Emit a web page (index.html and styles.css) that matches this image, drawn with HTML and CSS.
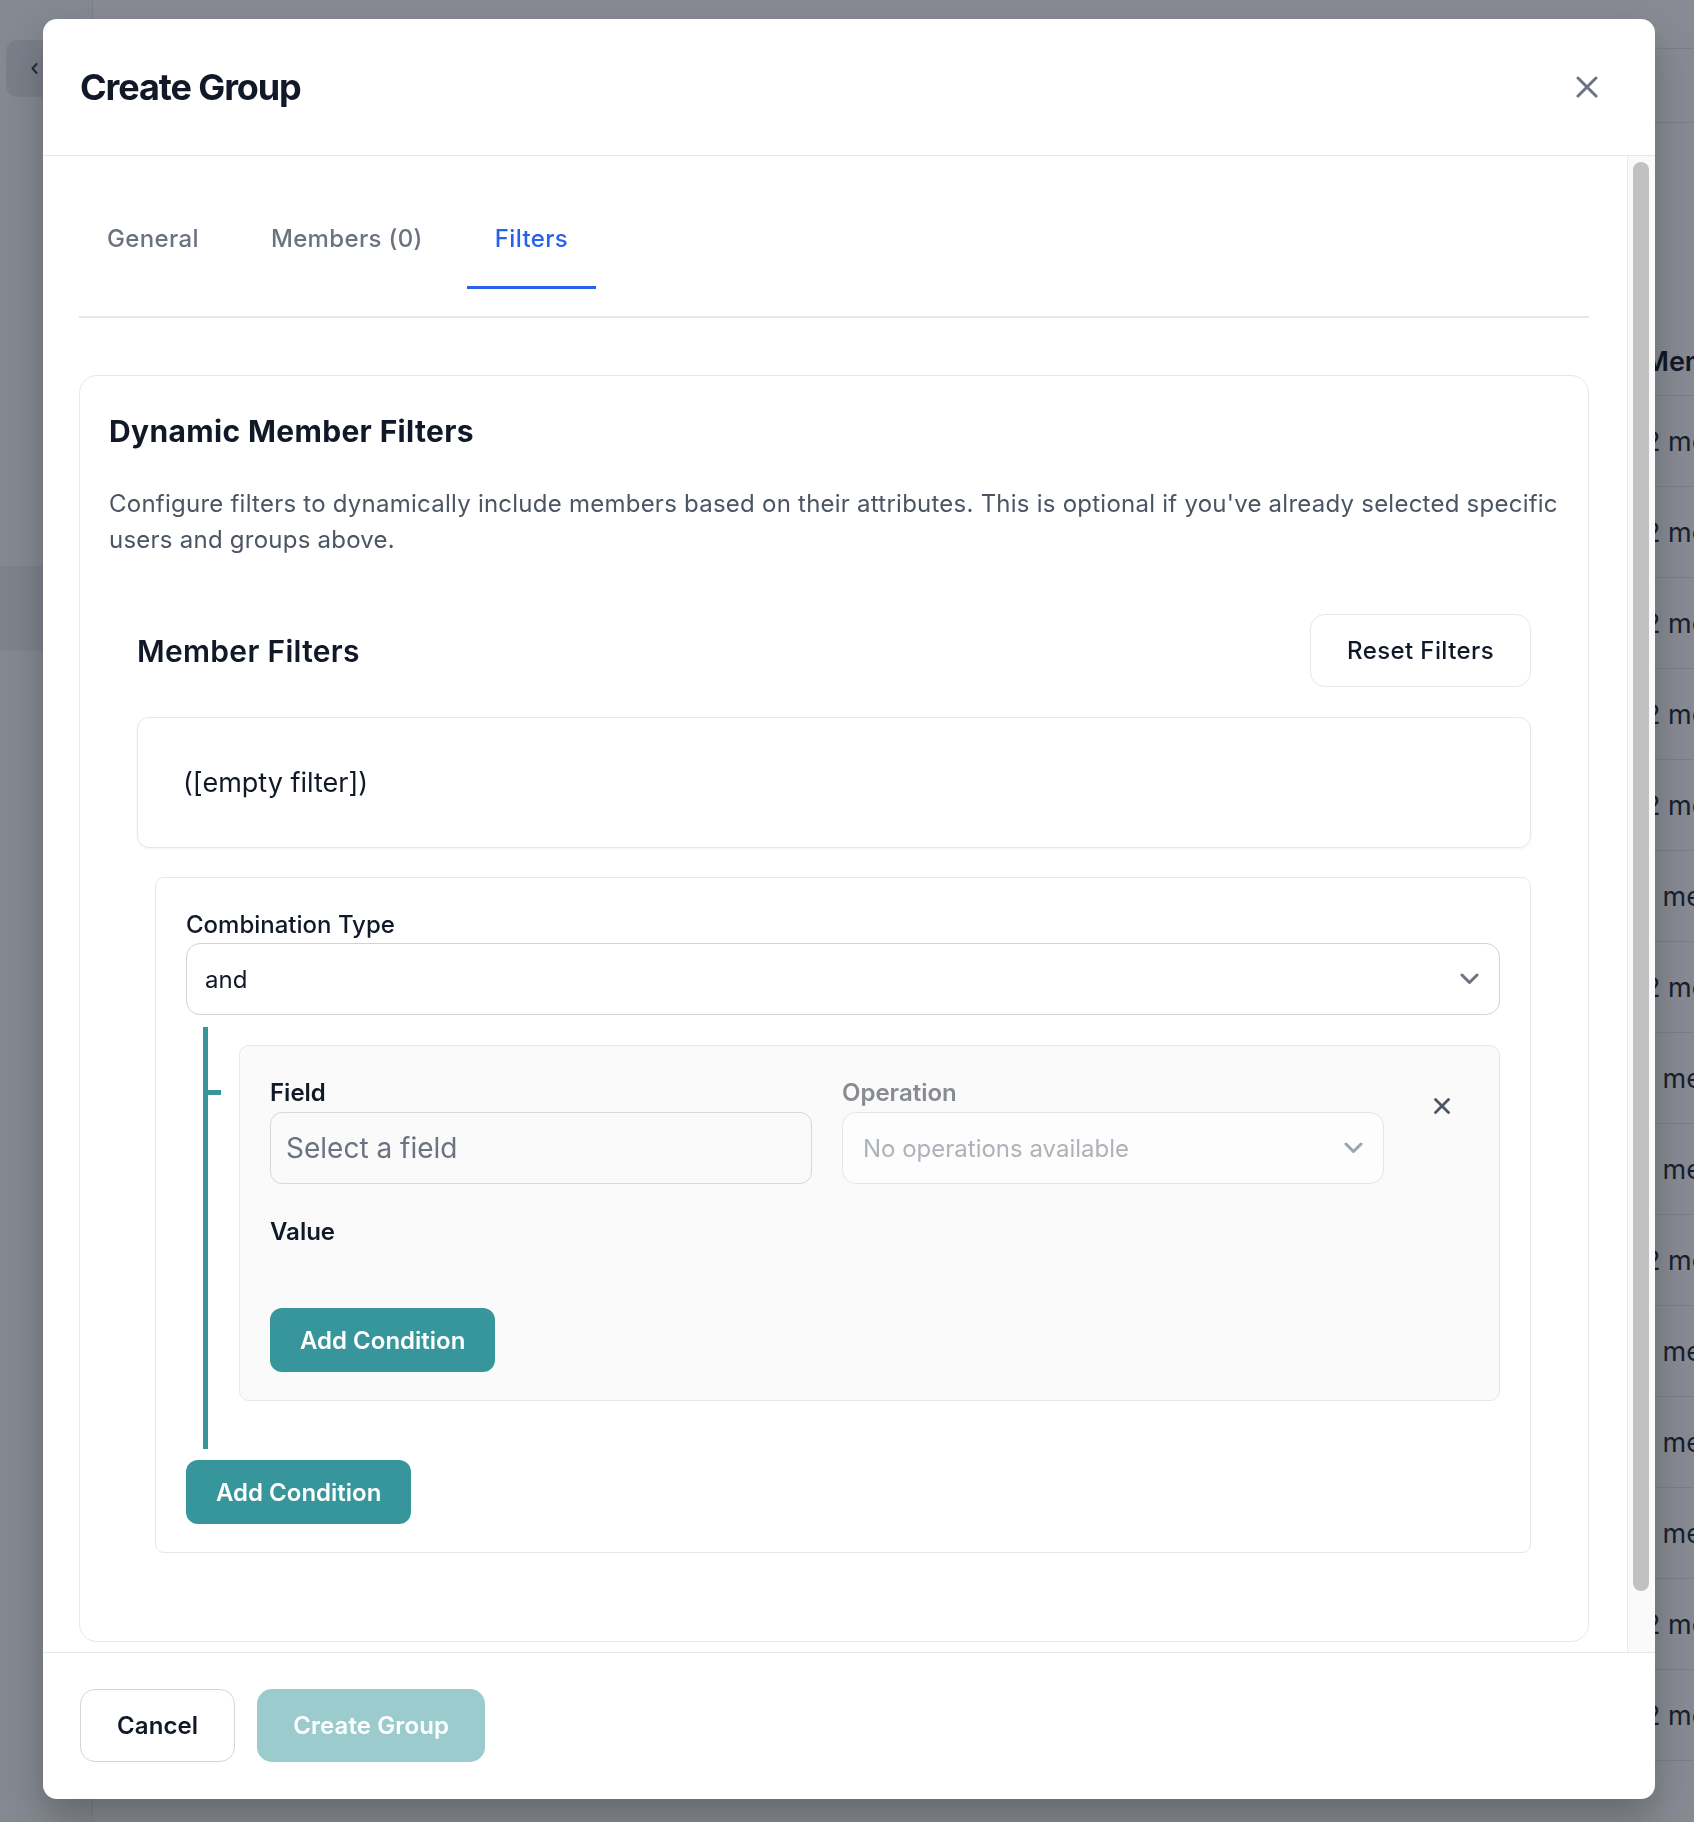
FILE: index.html
```html
<!DOCTYPE html>
<html>
<head>
    <title>Create Group</title>
    <link rel="stylesheet" href="styles.css">
</head>
<body>
    <div class="page">
        <aside class="sidebar">
            <button class="collapse-button">
                <svg width="7" height="11" viewBox="0 0 7 11"><polyline points="5.5,1 1.5,5.5 5.5,10" fill="none" stroke="#374151" stroke-width="2" stroke-linecap="round" stroke-linejoin="round"/></svg>
            </button>
            <div class="nav-item"></div>
        </aside>
        <main class="main">
            <div class="topbar"></div>
            <div class="subbar"></div>
            <div class="groups-table">
                <div class="groups-head"><span class="cell-members">Members</span></div>
                <div class="groups-row"><span class="cell-members">2 members</span></div>
                <div class="groups-row"><span class="cell-members">2 members</span></div>
                <div class="groups-row"><span class="cell-members">2 members</span></div>
                <div class="groups-row"><span class="cell-members">2 members</span></div>
                <div class="groups-row"><span class="cell-members">2 members</span></div>
                <div class="groups-row"><span class="cell-members">1 member</span></div>
                <div class="groups-row"><span class="cell-members">2 members</span></div>
                <div class="groups-row"><span class="cell-members">1 member</span></div>
                <div class="groups-row"><span class="cell-members">1 member</span></div>
                <div class="groups-row"><span class="cell-members">2 members</span></div>
                <div class="groups-row"><span class="cell-members">1 member</span></div>
                <div class="groups-row"><span class="cell-members">1 member</span></div>
                <div class="groups-row"><span class="cell-members">1 member</span></div>
                <div class="groups-row"><span class="cell-members">2 members</span></div>
                <div class="groups-row"><span class="cell-members">2 members</span></div>
            </div>
        </main>
    </div>

    <div class="overlay">
        <div class="modal">
            <div class="modal-header">
                <h2>Create Group</h2>
                <button class="close-button">
                    <svg width="22" height="22" viewBox="0 0 22 22"><path d="M2 2L20 20M20 2L2 20" stroke="#6b7280" stroke-width="3" stroke-linecap="round"/></svg>
                </button>
            </div>

            <div class="modal-body">
                <div class="modal-scroll">
                    <div class="tabs">
                        <button class="tab">General</button>
                        <button class="tab">Members (0)</button>
                        <button class="tab active">Filters</button>
                    </div>

                    <div class="card">
                        <h3>Dynamic Member Filters</h3>
                        <p class="hint">Configure filters to dynamically include members based on their attributes. This is optional if you've already selected specific users and groups above.</p>

                        <div class="builder">
                            <div class="builder-head">
                                <h4>Member Filters</h4>
                                <button class="reset-button">Reset Filters</button>
                            </div>

                            <div class="preview">([empty filter])</div>

                            <div class="group-box">
                                <label class="label">Combination Type</label>
                                <div class="select">
                                    <span>and</span>
                                    <svg width="19" height="12" viewBox="0 0 19 12"><polyline points="2,2 9.5,9.5 17,2" fill="none" stroke="#6b7280" stroke-width="3" stroke-linecap="round" stroke-linejoin="round"/></svg>
                                </div>

                                <div class="children">
                                    <div class="condition">
                                        <div class="condition-row">
                                            <div class="fields">
                                                <div class="field">
                                                    <label class="label strong">Field</label>
                                                    <input class="input" placeholder="Select a field">
                                                </div>
                                                <div class="field disabled">
                                                    <label class="label strong">Operation</label>
                                                    <div class="select">
                                                        <span>No operations available</span>
                                                        <svg width="19" height="12" viewBox="0 0 19 12"><polyline points="2,2 9.5,9.5 17,2" fill="none" stroke="#9ca3af" stroke-width="3" stroke-linecap="round" stroke-linejoin="round"/></svg>
                                                    </div>
                                                </div>
                                            </div>
                                            <button class="remove-button">
                                                <svg width="16" height="16" viewBox="0 0 16 16"><path d="M1.5 1.5L14.5 14.5M14.5 1.5L1.5 14.5" stroke="#4b5563" stroke-width="2.8" stroke-linecap="round"/></svg>
                                            </button>
                                        </div>
                                        <label class="label strong value-label">Value</label>
                                        <button class="add-button inner">Add Condition</button>
                                    </div>
                                </div>

                                <button class="add-button outer">Add Condition</button>
                            </div>
                        </div>
                    </div>
                </div>
                <div class="scrollbar"><div class="thumb"></div></div>
            </div>

            <div class="modal-footer">
                <button class="cancel-button">Cancel</button>
                <button class="create-button" disabled>Create Group</button>
            </div>
        </div>
    </div>
</body>
</html>
```

FILE: styles.css
```css
* {
    box-sizing: border-box;
}

body {
    margin: 0;
    width: 1694px;
    height: 1822px;
    overflow: hidden;
    font-family: Inter, "Noto Sans", sans-serif;
    color: #111827;
}

button {
    font-family: inherit;
    cursor: pointer;
}

/* page behind the dialog */
.page {
    display: flex;
    height: 1822px;
    background: #fff;
}

.sidebar {
    width: 93px;
    flex-shrink: 0;
    padding-top: 40px;
    background: #f9fafb;
    border-right: 1px solid #e5e7eb;
}

.collapse-button {
    display: flex;
    align-items: center;
    width: 70px;
    height: 57px;
    margin-left: 6px;
    padding: 0 0 0 25px;
    border: none;
    border-radius: 12px;
    background: #e5e7eb;
}

.nav-item {
    height: 85px;
    margin-top: 469px;
    background: #eceef1;
}

.main {
    flex: 1;
    overflow: hidden;
}

.topbar {
    height: 49px;
    border-bottom: 1px solid #e5e7eb;
}

.subbar {
    height: 74px;
    border-bottom: 1px solid #e5e7eb;
}

.groups-table {
    margin-top: 205px;
}

.groups-head,
.groups-row {
    display: flex;
    align-items: center;
    justify-content: flex-end;
    border-bottom: 1px solid #e5e7eb;
    font-size: 27px;
}

.groups-head {
    height: 68px;
    font-weight: 600;
}

.groups-row {
    height: 91px;
    color: #1f2937;
}

.cell-members {
    width: 50px;
    white-space: nowrap;
}

/* dialog */
.overlay {
    position: fixed;
    inset: 0;
    display: flex;
    align-items: flex-start;
    padding: 19px 0 0 43px;
    background: rgba(17, 24, 39, 0.5);
}

.modal {
    display: flex;
    flex-direction: column;
    width: 1612px;
    height: 1780px;
    background: #fff;
    border-radius: 14px;
    overflow: hidden;
    box-shadow: 0 20px 40px rgba(0, 0, 0, 0.25);
}

.modal-header {
    display: flex;
    align-items: center;
    justify-content: space-between;
    flex-shrink: 0;
    height: 137px;
    padding: 0 45px 0 37px;
    border-bottom: 1px solid #e5e7eb;
}

.modal-header h2 {
    margin: 0;
    font-size: 36px;
    line-height: 48px;
    font-weight: 700;
    letter-spacing: -1.1px;
}

.close-button {
    padding: 12px;
    border: none;
    background: none;
    line-height: 0;
}

.modal-body {
    display: flex;
    flex: 1;
    min-height: 0;
}

.modal-scroll {
    flex: 1;
    overflow: hidden;
    padding: 36px 38px 0 36px;
}

.scrollbar {
    width: 28px;
    flex-shrink: 0;
    padding: 6px 6px 0 5px;
    background: #fafafa;
    border-left: 1px solid #ececec;
}

.thumb {
    height: 1429px;
    background: #c1c1c1;
    border-radius: 8px;
}

/* tabs */
.tabs {
    display: flex;
    gap: 16px;
    padding-bottom: 27px;
    border-bottom: 2px solid #e5e7eb;
}

.tab {
    padding: 29px 28px 29px;
    border: none;
    border-bottom: 3px solid transparent;
    background: none;
    font-size: 24px;
    line-height: 36px;
    font-weight: 500;
    letter-spacing: 0.35px;
    color: #6b7280;
}

.tab.active {
    color: #2563eb;
    border-bottom-color: #2563eb;
}

/* filters card */
.card {
    margin-top: 57px;
    padding: 34px 29px 60px;
    border: 1px solid #e5e7eb;
    border-radius: 18px;
}

.card h3 {
    margin: 0 0 34px;
    font-size: 30px;
    line-height: 42px;
    font-weight: 700;
    letter-spacing: 0.35px;
}

.hint {
    margin: 0 0 28px;
    font-size: 24px;
    line-height: 36px;
    letter-spacing: 0.24px;
    color: #4b5563;
}

.builder {
    padding: 28px;
}

.builder-head {
    display: flex;
    align-items: center;
    justify-content: space-between;
    margin-bottom: 30px;
}

.builder-head h4 {
    margin: 0;
    font-size: 30px;
    line-height: 42px;
    font-weight: 600;
    letter-spacing: 0.3px;
}

.reset-button {
    height: 73px;
    padding: 0 36px;
    border: 1px solid #e5e7eb;
    border-radius: 15px;
    background: #fff;
    font-size: 24px;
    font-weight: 500;
    letter-spacing: 0.4px;
    color: #111827;
}

.preview {
    display: flex;
    align-items: center;
    height: 131px;
    margin-bottom: 29px;
    padding: 0 45px;
    border: 1px solid #e5e7eb;
    border-radius: 12px;
    box-shadow: 0 1px 3px rgba(0, 0, 0, 0.05);
    font-size: 27px;
}

.group-box {
    margin-left: 18px;
    padding: 29px 30px 28px;
    border: 1px solid #e5e7eb;
    border-radius: 9px;
    background: #fff;
}

.label {
    display: block;
    font-size: 24px;
    line-height: 36px;
    font-weight: 500;
}

.label.strong {
    font-weight: 600;
    margin-bottom: 1px;
}

.select {
    display: flex;
    align-items: center;
    justify-content: space-between;
    height: 72px;
    padding: 0 20px 0 18px;
    border: 1px solid #cfd3da;
    border-radius: 14px;
    background: #fff;
    font-size: 24px;
}

.children {
    margin: 12px 0 0 17px;
    padding: 18px 0 48px 31px;
    border-left: 5px solid #37969b;
}

.condition {
    position: relative;
    padding: 29px 30px 28px;
    background: #fafafa;
    border: 1px solid #e5e7eb;
    border-radius: 10px;
}

.condition::before {
    content: "";
    position: absolute;
    left: -37px;
    top: 44px;
    width: 18px;
    height: 5px;
    background: #37969b;
}

.condition-row {
    display: flex;
    align-items: flex-start;
    gap: 30px;
}

.fields {
    flex: 1;
    display: grid;
    grid-template-columns: 1fr 1fr;
    gap: 30px;
}

.input {
    display: block;
    width: 100%;
    height: 72px;
    padding: 0 15px;
    border: 1px solid #d5d8dd;
    border-radius: 12px;
    background: #fafafa;
    font-family: inherit;
    font-size: 28px;
    color: #111827;
    outline: none;
}

.input::placeholder {
    color: #6b7280;
}

.field.disabled .label {
    color: #888b91;
}

.field.disabled .select {
    padding-left: 20px;
    border-color: #e3e5e9;
    background: #fdfdfd;
    color: #aeb2b9;
}

.remove-button {
    display: flex;
    align-items: center;
    justify-content: center;
    width: 55px;
    height: 52px;
    margin-top: 5px;
    padding: 0;
    border: none;
    background: none;
}

.value-label {
    margin-top: 30px;
}

.add-button {
    display: block;
    height: 64px;
    padding: 0 30px;
    border: none;
    border-radius: 12px;
    background: #37969b;
    color: #fff;
    font-size: 24px;
    font-weight: 600;
}

.add-button.inner {
    margin-top: 58px;
}

.add-button.outer {
    margin-top: 11px;
}

/* footer */
.modal-footer {
    display: flex;
    gap: 22px;
    flex-shrink: 0;
    height: 147px;
    padding: 36px 0 37px 37px;
    border-top: 1px solid #e5e7eb;
}

.cancel-button,
.create-button {
    height: 73px;
    padding: 0 36px;
    border-radius: 15px;
    font-size: 24px;
    font-weight: 600;
    letter-spacing: 0.1px;
}

.cancel-button {
    border: 1px solid #d1d5db;
    background: #fff;
    color: #111827;
}

.create-button {
    border: none;
    background: #9ccbce;
    color: #fff;
}
```
